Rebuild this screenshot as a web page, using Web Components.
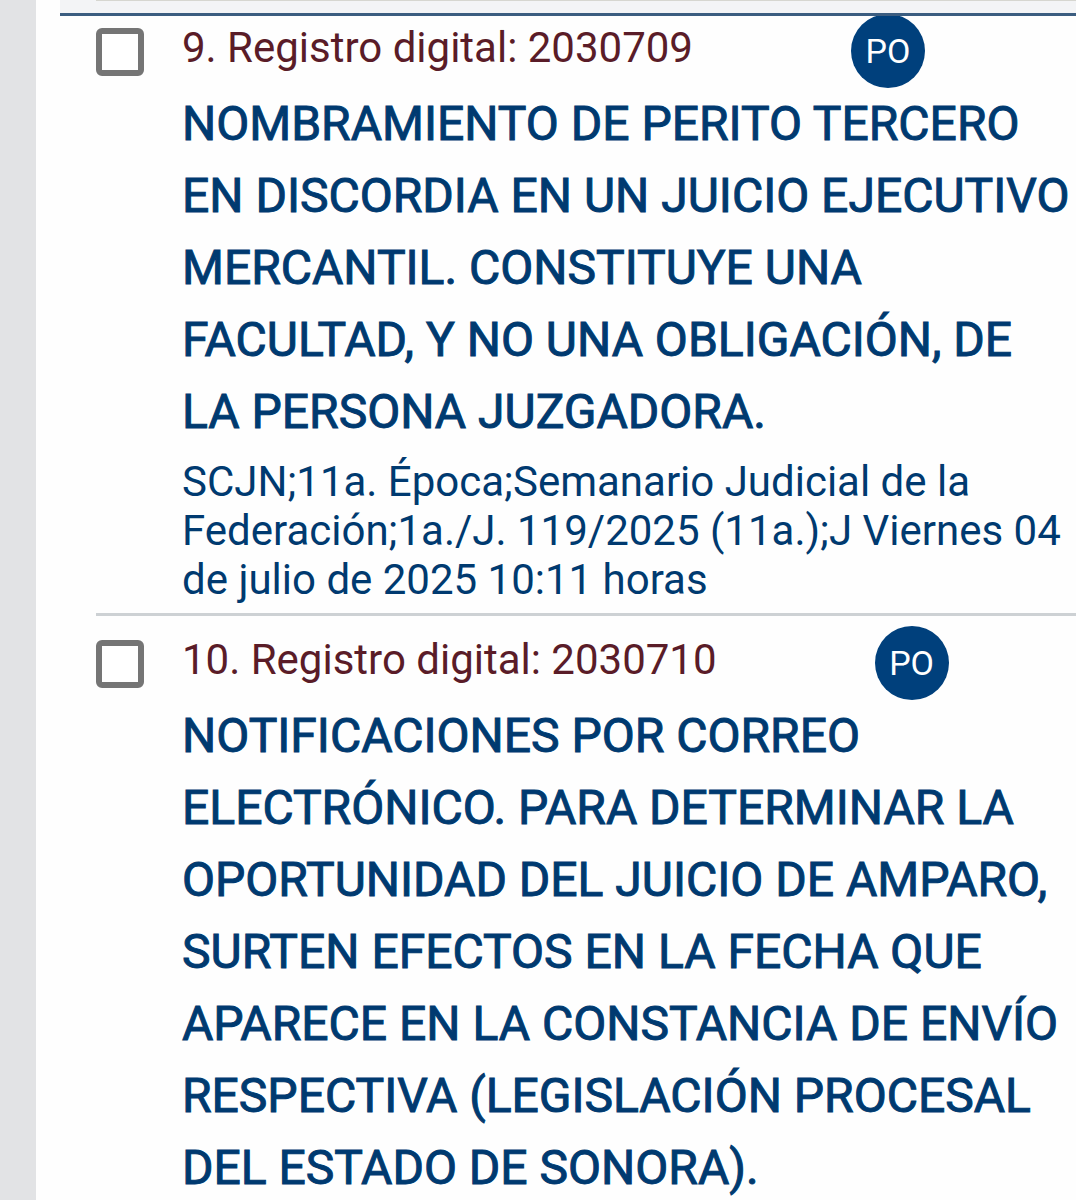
<!DOCTYPE html>
<html lang="es">
<head>
  <meta charset="utf-8">
  <meta name="viewport" content="width=device-width, initial-scale=1">
  <title>Semanario Judicial de la Federación</title>
  <style>
    body {
      margin: 0;
      font-family: Roboto, sans-serif;
      color: #003a70;
      background-color: #fefefe;
    }
  </style>
</head>
<body>
  <tesis-list>
    <tesis-item numero="9" registro="2030709" tipo="PO">
      NOMBRAMIENTO DE PERITO TERCERO EN DISCORDIA EN UN JUICIO EJECUTIVO MERCANTIL. CONSTITUYE UNA FACULTAD, Y NO UNA OBLIGACIÓN, DE LA PERSONA JUZGADORA.
      <span slot="fuente">SCJN;11a. Época;Semanario Judicial de la Federación;1a./J. 119/2025 (11a.);J Viernes 04 de julio de 2025 10:11 horas</span>
    </tesis-item>
    <tesis-item numero="10" registro="2030710" tipo="PO">
      NOTIFICACIONES POR CORREO ELECTRÓNICO. PARA DETERMINAR LA OPORTUNIDAD DEL JUICIO DE AMPARO, SURTEN EFECTOS EN LA FECHA QUE APARECE EN LA CONSTANCIA DE ENVÍO RESPECTIVA (LEGISLACIÓN PROCESAL DEL ESTADO DE SONORA).
    </tesis-item>
  </tesis-list>

  <script>
    /**
     * Round badge with the short name of the kind of thesis.
     */
    class TipoBadge extends HTMLElement {
      constructor () {
        super()
        this.attachShadow({ mode: 'open' })
      }

      connectedCallback () {
        this.shadowRoot.innerHTML = `
          <style>
            :host {
              display: flex;
              flex: none;
              align-items: center;
              justify-content: center;
              width: 74px;
              height: 74px;
              border-radius: 50%;
              background-color: #00407c;
              color: #fff;
              font-size: 34px;
              line-height: 40px;
            }
          </style>
          <slot></slot>
        `
      }
    }

    /**
     * One result: checkbox, registry number, badge, title and source.
     * The title goes in the default slot, the source in the "fuente" slot.
     */
    class TesisItem extends HTMLElement {
      constructor () {
        super()
        this.attachShadow({ mode: 'open' })
      }

      connectedCallback () {
        this.render()
      }

      render () {
        const numero = this.getAttribute('numero')
        const registro = this.getAttribute('registro')
        const tipo = this.getAttribute('tipo')

        this.shadowRoot.innerHTML = `
          <style>
            :host {
              display: grid;
              grid-template-columns: 48px 1fr;
              column-gap: 38px;
              padding: 10px 4px 9px 0;
              border-bottom: 3px solid #cdd1d4;
            }

            input {
              appearance: none;
              box-sizing: border-box;
              width: 48px;
              height: 48px;
              margin: 14px 0 0;
              border: 6px solid #757575;
              border-radius: 6px;
              background-color: #fff;
            }

            input:checked {
              background-color: #00407c;
            }

            header {
              display: flex;
              align-items: center;
              gap: 158px;
            }

            label {
              font-size: 42px;
              line-height: 49px;
              margin-bottom: 8px;
              color: #5a1c28;
            }

            /* heavier strokes on the regular widths */
            h2 {
              margin: 0;
              font-size: 48px;
              font-weight: 400;
              line-height: 72px;
              -webkit-text-stroke: 1px currentColor;
            }

            p {
              margin: 9px 0 0;
              font-size: 42px;
              line-height: 49px;
            }
          </style>
          <input type="checkbox" id="tesis">
          <article>
            <header>
              <label for="tesis">${numero}. Registro digital: ${registro}</label>
              <tipo-badge>${tipo}</tipo-badge>
            </header>
            <h2><slot></slot></h2>
            <p><slot name="fuente"></slot></p>
          </article>
        `
      }
    }

    /**
     * Results panel with the side gutter and the bar that stays over the rows.
     */
    class TesisList extends HTMLElement {
      constructor () {
        super()
        this.attachShadow({ mode: 'open' })
      }

      connectedCallback () {
        this.shadowRoot.innerHTML = `
          <style>
            :host {
              display: block;
              box-sizing: border-box;
              height: 100vh;
              overflow: hidden;
              padding-left: 24px;
              border-left: 36px solid #e2e3e5;
            }

            .bar {
              position: relative;
              z-index: 1;
              box-sizing: border-box;
              height: 16px;
              padding-left: 36px;
              border-bottom: 3px solid #3b5d80;
              background-color: #f3f4f6;
            }

            .bar hr {
              margin: 0;
              border: 0;
              border-top: 1px solid #d6d6d0;
            }

            /* the first row is scrolled a little under the bar */
            .rows {
              margin: -12px 0 0 36px;
            }
          </style>
          <div class="bar"><hr></div>
          <div class="rows"><slot></slot></div>
        `
      }
    }

    customElements.define('tipo-badge', TipoBadge)
    customElements.define('tesis-item', TesisItem)
    customElements.define('tesis-list', TesisList)
  </script>
</body>
</html>
